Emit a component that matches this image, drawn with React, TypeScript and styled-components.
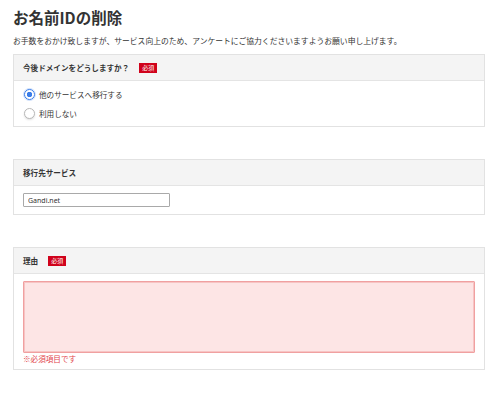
import React from 'react';
import styled, { createGlobalStyle } from 'styled-components';

const GlobalStyle = createGlobalStyle`
	body {
		margin: 0;
		background: #ffffff;
		font-family: "Noto Sans CJK JP", "Noto Sans", sans-serif;
		color: #333333;
	}
`;

const App: React.FC = () => {
	return (
		<Page>
			<GlobalStyle />
			<Title>お名前IDの削除</Title>
			<Lead>お手数をおかけ致しますが、サービス向上のため、アンケートにご協力くださいますようお願い申し上げます。</Lead>

			<Panel>
				<PanelHeader>
					今後ドメインをどうしますか？
					<Required>必須</Required>
				</PanelHeader>
				<RadioBody>
					<RadioRow>
						<Radio checked />
						他のサービスへ移行する
					</RadioRow>
					<RadioRow>
						<Radio />
						利用しない
					</RadioRow>
				</RadioBody>
			</Panel>

			<Panel>
				<PanelHeader>移行先サービス</PanelHeader>
				<InputBody>
					<TextInput defaultValue="Gandi.net" />
				</InputBody>
			</Panel>

			<Panel>
				<PanelHeader>
					理由
					<Required>必須</Required>
				</PanelHeader>
				<ReasonBody>
					<ErrorArea />
					<ErrorText>※必須項目です</ErrorText>
				</ReasonBody>
			</Panel>
		</Page>
	);
};

const Page = styled.div`
	padding: 6px 15px 0 13px;
	width: 472px;
`;

const Title = styled.h1`
	margin: 0;
	font-size: 15.5px;
	line-height: 22px;
	font-weight: 700;
	color: #333333;
`;

const Lead = styled.p`
	margin: 7px 0 0;
	font-size: 7.8px;
	line-height: 12px;
	color: #333333;
	white-space: nowrap;
`;

const Panel = styled.section`
	margin-top: 7px;
	border: 1px solid #e2e2e2;
	background: #ffffff;

	& + & {
		margin-top: 32px;
	}
`;

const PanelHeader = styled.div`
	display: flex;
	align-items: center;
	height: 25px;
	padding: 0 9px;
	background: #f4f4f4;
	border-bottom: 1px solid #e4e4e4;
	font-size: 7.6px;
	font-weight: 700;
	color: #333333;
`;

const Required = styled.span`
	display: inline-flex;
	align-items: center;
	justify-content: center;
	margin-left: 10px;
	width: 18px;
	height: 10px;
	background: #d0021b;
	color: #ffffff;
	font-size: 6px;
	font-weight: 400;
`;

const RadioBody = styled.div`
	display: flex;
	flex-direction: column;
	padding: 4px 10px 3px;
`;

const RadioRow = styled.label`
	display: flex;
	align-items: center;
	gap: 4px;
	height: 19px;
	font-size: 7.6px;
	color: #333333;
`;

const Radio = styled.span<{ checked?: boolean }>`
	box-sizing: border-box;
	width: 11px;
	height: 11px;
	border-radius: 50%;
	border: 1px solid ${(p) => (p.checked ? '#3b7de8' : '#b8b8b8')};
	background: ${(p) =>
		p.checked ? 'radial-gradient(circle, #3b7de8 0 2.5px, #ffffff 3px)' : '#ffffff'};
	box-shadow: ${(p) => (p.checked ? '0 0 0 1px #cfe0fb' : '0 1px 2px rgba(0,0,0,0.12)')};
`;

const InputBody = styled.div`
	padding: 7px 9px 7px;
`;

const TextInput = styled.input`
	box-sizing: border-box;
	display: block;
	width: 147px;
	height: 14px;
	padding: 0 4px;
	border: 1px solid #a9a9a9;
	border-radius: 1px;
	font-family: "Noto Sans", sans-serif;
	font-size: 7px;
	color: #333333;
	outline: none;
`;

const ReasonBody = styled.div`
	padding: 7px 9px 5px;
`;

const ErrorArea = styled.div`
	box-sizing: border-box;
	height: 72px;
	background: #fde5e5;
	border: 1px solid #f0a0a0;
	box-shadow: inset 0 0 0 1px #f7c4c4;
	border-radius: 1px;
`;

const ErrorText = styled.div`
	margin-top: 1px;
	font-size: 7.6px;
	line-height: 10px;
	color: #e2454c;
`;

export default App;
